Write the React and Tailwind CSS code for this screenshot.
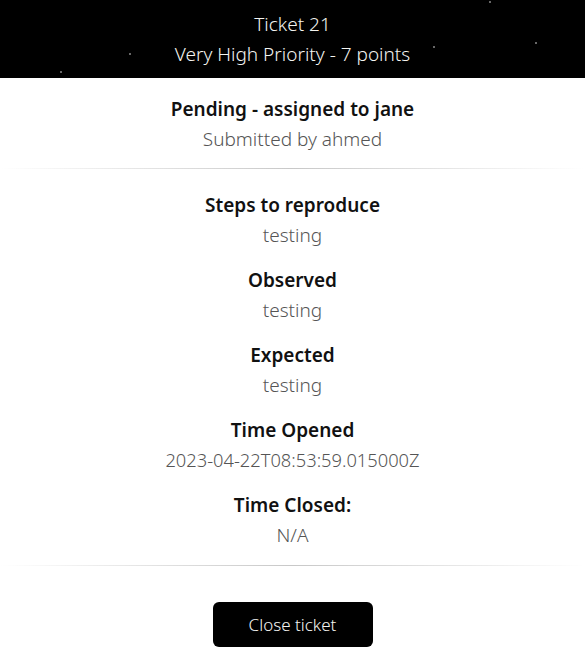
import React from 'react';

const stars = [
    {x: 129, y: 53},
    {x: 60, y: 71},
    {x: 489, y: 1},
    {x: 433, y: 46},
    {x: 535, y: 42},
]

const fields = [
    {label: 'Steps to reproduce', value: 'testing'},
    {label: 'Observed', value: 'testing'},
    {label: 'Expected', value: 'testing'},
    {label: 'Time Opened', value: '2023-04-22T08:53:59.015000Z', small: true},
    {label: 'Time Closed:', value: 'N/A'},
]

const Divider = () => (
    <div className="h-px w-full bg-gradient-to-r from-transparent via-[#c8c8c8] to-transparent" />
)

export default function App() {
    return (
        <div className="min-h-[656px] w-full bg-white text-center font-['Noto_Sans',sans-serif] text-[19px] leading-[30px]">
            <div className="relative bg-black pt-[9px] pb-[9px] font-light text-[#f4f4f0]">
                {stars.map((s, i) => (
                    <span key={i} className="absolute h-[2px] w-[2px] rounded-full bg-[#8a8a8a]"
                          style={{left: s.x, top: s.y}} />
                ))}
                <div>Ticket 21</div>
                <div>Very High Priority - 7 points</div>
            </div>

            <div className="pt-[16px] pb-[14px]">
                <div className="font-semibold text-[#111]">Pending - assigned to jane</div>
                <div className="font-light text-[#555]">Submitted by ahmed</div>
            </div>

            <Divider />

            <div className="flex flex-col gap-[15px] pt-[21px] pb-[15px]">
                {fields.map((f, i) => (
                    <div key={i}>
                        <div className="font-semibold text-[#111]">{f.label}</div>
                        <div className={`font-light text-[#555] ${f.small ? 'text-[18.3px]' : ''}`}>{f.value}</div>
                    </div>
                ))}
            </div>

            <Divider />

            <div className="flex justify-center pt-[36px]">
                <button className="h-[45px] w-[160px] rounded-md bg-black text-[17px] font-light text-[#f4f4f0]">
                    Close ticket
                </button>
            </div>
        </div>
    )
}
